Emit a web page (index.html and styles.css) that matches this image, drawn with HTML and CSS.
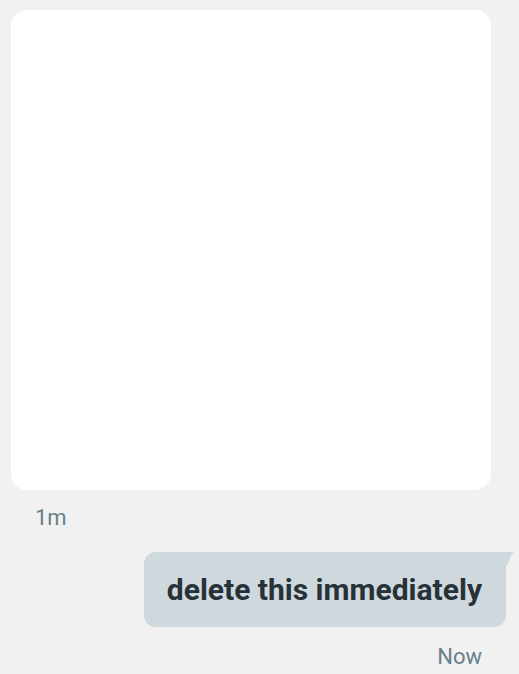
FILE: index.html
```html
<!DOCTYPE html>
<html>
<head>
<meta charset="utf-8">
<link rel="stylesheet" href="styles.css">
</head>
<body>
<div class="thread">
  <div class="incoming">
    <div class="image-card"></div>
    <div class="time time-left">1m</div>
  </div>
  <div class="outgoing">
    <div class="bubble">
      <span class="bubble-text">delete this immediately</span>
      <svg class="tail" width="12" height="16" viewBox="0 0 12 16"><path d="M0 0 H10 Q7 2 6 6 Q5 12 0 16 Z" fill="#cfd8dc"/></svg>
    </div>
    <div class="time time-right">Now</div>
  </div>
</div>
</body>
</html>
```

FILE: styles.css
```css
html, body {
  margin: 0;
  padding: 0;
  background: #f1f1f1;
}
body {
  font-family: Roboto, "Noto Sans", sans-serif;
  width: 519px;
  height: 674px;
  overflow: hidden;
}
.thread {
  display: flex;
  flex-direction: column;
  padding-top: 10px;
}
.incoming {
  display: flex;
  flex-direction: column;
  align-items: flex-start;
  padding-left: 11px;
}
.image-card {
  width: 480px;
  height: 480px;
  background: #ffffff;
  border-radius: 16px;
}
.time {
  font-size: 22px;
  color: #67808b;
  line-height: 24px;
}
.time-left {
  margin-top: 16px;
  margin-left: 24px;
}
.outgoing {
  display: flex;
  flex-direction: column;
  align-items: flex-end;
  margin-top: 22px;
}
.bubble {
  position: relative;
  background: #cfd8dc;
  border-radius: 12px 0 12px 12px;
  height: 75px;
  box-sizing: border-box;
  padding: 0 24px 0 23px;
  margin-right: 13px;
  display: flex;
  align-items: center;
}
.bubble-text {
  font-size: 30px;
  font-weight: 700;
  color: #263238;
  white-space: nowrap;
  line-height: 36px;
}
.tail {
  position: absolute;
  top: 0;
  right: -10px;
}
.time-right {
  margin-top: 18px;
  margin-right: 37px;
}
```
